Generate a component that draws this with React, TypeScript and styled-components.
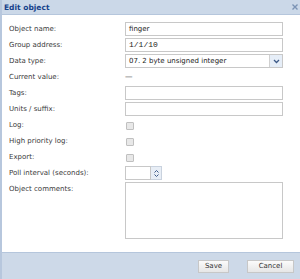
import React from 'react'
import styled, { createGlobalStyle } from 'styled-components'

const GlobalStyle = createGlobalStyle`
  html, body {
    margin: 0;
    padding: 0;
    background: #ffffff;
  }
  body {
    font-family: 'DejaVu Sans', 'Liberation Sans', sans-serif;
  }
`

const Dialog = styled.div`
  width: 300px;
  height: 279px;
  box-sizing: border-box;
  display: flex;
  flex-direction: column;
  background: #cdd9e8;
  border-left: 2px solid #b7c7dd;
`

const TitleBar = styled.div`
  height: 14px;
  display: flex;
  align-items: center;
  justify-content: space-between;
  padding: 0 1px 0 2px;
  background: #cbd8e8;
  color: #15428b;
  font-size: 7.5px;
  font-weight: bold;
`

const CloseButton = styled.div`
  width: 9px;
  height: 9px;
  display: flex;
  align-items: center;
  justify-content: center;
`

const Body = styled.div`
  flex: 1;
  background: #ffffff;
  border-top: 1px solid #b5c6dc;
  border-bottom: 1px solid #b5c6dc;
  padding: 7px 17px 0 7px;
  display: flex;
  flex-direction: column;
  gap: 2px;
`

const Row = styled.div<{ h?: number }>`
  display: grid;
  grid-template-columns: 116px 1fr;
  align-items: start;
  height: ${(p) => (p.h || 14)}px;
`

const Label = styled.div`
  font-size: 7px;
  color: #3a3a3a;
  line-height: 15px;
`

const Field = styled.div`
  height: 14px;
  box-sizing: border-box;
  border: 1px solid #c8c8c8;
  background: #ffffff;
  font-family: 'Liberation Mono', 'DejaVu Sans Mono', monospace;
  font-size: 8px;
  color: #222;
  line-height: 12px;
  padding: 0 3px;
  display: flex;
  align-items: center;
`

const TextField = styled(Field)`
  font-family: 'DejaVu Sans', 'Liberation Sans', sans-serif;
  font-size: 7px;
`

const SelectBox = styled(Field)`
  justify-content: space-between;
  padding-right: 0;
  font-family: 'DejaVu Sans', 'Liberation Sans', sans-serif;
  font-size: 7px;
`

const ArrowBox = styled.div`
  width: 12px;
  height: 12px;
  border-left: 1px solid #d0d0d0;
  background: #e6eef8;
  display: flex;
  align-items: center;
  justify-content: center;
`

const Dash = styled.div`
  font-size: 7.5px;
  line-height: 14px;
  color: #333;
`

const Check = styled.div`
  width: 6px;
  height: 6px;
  margin: 4px 0 0 1px;
  border: 1px solid #c0c0c0;
  border-radius: 1px;
  background: #e8e8e8;
`

const SpinWrap = styled.div`
  display: flex;
  align-items: flex-start;
  height: 14px;
`

const SpinInput = styled(Field)`
  width: 26px;
`

const SpinButton = styled.div`
  width: 11px;
  height: 14px;
  box-sizing: border-box;
  border: 1px solid #c9d2de;
  border-left: none;
  background: #e8eef6;
  display: flex;
  align-items: center;
  justify-content: center;
`

const TextArea = styled.div`
  height: 57px;
  box-sizing: border-box;
  border: 1px solid #c8c8c8;
  background: #fff;
`

const Footer = styled.div`
  height: 26px;
  display: flex;
  align-items: center;
  justify-content: flex-end;
  gap: 18px;
  padding: 0 6px 0 0;
`

const Button = styled.div<{ w: number }>`
  width: ${(p) => p.w}px;
  height: 13px;
  box-sizing: border-box;
  border: 1px solid #c7c7c7;
  background: linear-gradient(#fbfbfb, #e6e6e6);
  font-size: 7px;
  color: #333;
  display: flex;
  align-items: center;
  justify-content: center;
`

export default function App() {
  return (
    <>
      <GlobalStyle />
      <Dialog>
        <TitleBar>
          <span>Edit object</span>
          <CloseButton>
            <svg width="8" height="8" viewBox="0 0 8 8">
              <path d="M1.5 1.5 L6.5 6.5 M6.5 1.5 L1.5 6.5" stroke="#7b93b5" strokeWidth="1.4" />
            </svg>
          </CloseButton>
        </TitleBar>
        <Body>
          <Row>
            <Label>Object name:</Label>
            <TextField>finger</TextField>
          </Row>
          <Row>
            <Label>Group address:</Label>
            <Field>1/1/10</Field>
          </Row>
          <Row>
            <Label>Data type:</Label>
            <SelectBox>
              <span>07. 2 byte unsigned integer</span>
              <ArrowBox>
                <svg width="7" height="5" viewBox="0 0 7 5">
                  <path d="M1 1 L3.5 3.5 L6 1" stroke="#3d5a88" strokeWidth="1.3" fill="none" />
                </svg>
              </ArrowBox>
            </SelectBox>
          </Row>
          <Row>
            <Label>Current value:</Label>
            <Dash>—</Dash>
          </Row>
          <Row>
            <Label>Tags:</Label>
            <TextField />
          </Row>
          <Row>
            <Label>Units / suffix:</Label>
            <TextField />
          </Row>
          <Row>
            <Label>Log:</Label>
            <Check />
          </Row>
          <Row>
            <Label>High priority log:</Label>
            <Check />
          </Row>
          <Row>
            <Label>Export:</Label>
            <Check />
          </Row>
          <Row>
            <Label>Poll interval (seconds):</Label>
            <SpinWrap>
              <SpinInput />
              <SpinButton>
                <svg width="7" height="9" viewBox="0 0 7 9">
                  <path d="M1.5 3.5 L3.5 1.5 L5.5 3.5 M1.5 5.5 L3.5 7.5 L5.5 5.5" stroke="#3d5a88" strokeWidth="1" fill="none" />
                </svg>
              </SpinButton>
            </SpinWrap>
          </Row>
          <Row h={57}>
            <Label>Object comments:</Label>
            <TextArea />
          </Row>
        </Body>
        <Footer>
          <Button w={31}>Save</Button>
          <Button w={47}>Cancel</Button>
        </Footer>
      </Dialog>
    </>
  )
}
